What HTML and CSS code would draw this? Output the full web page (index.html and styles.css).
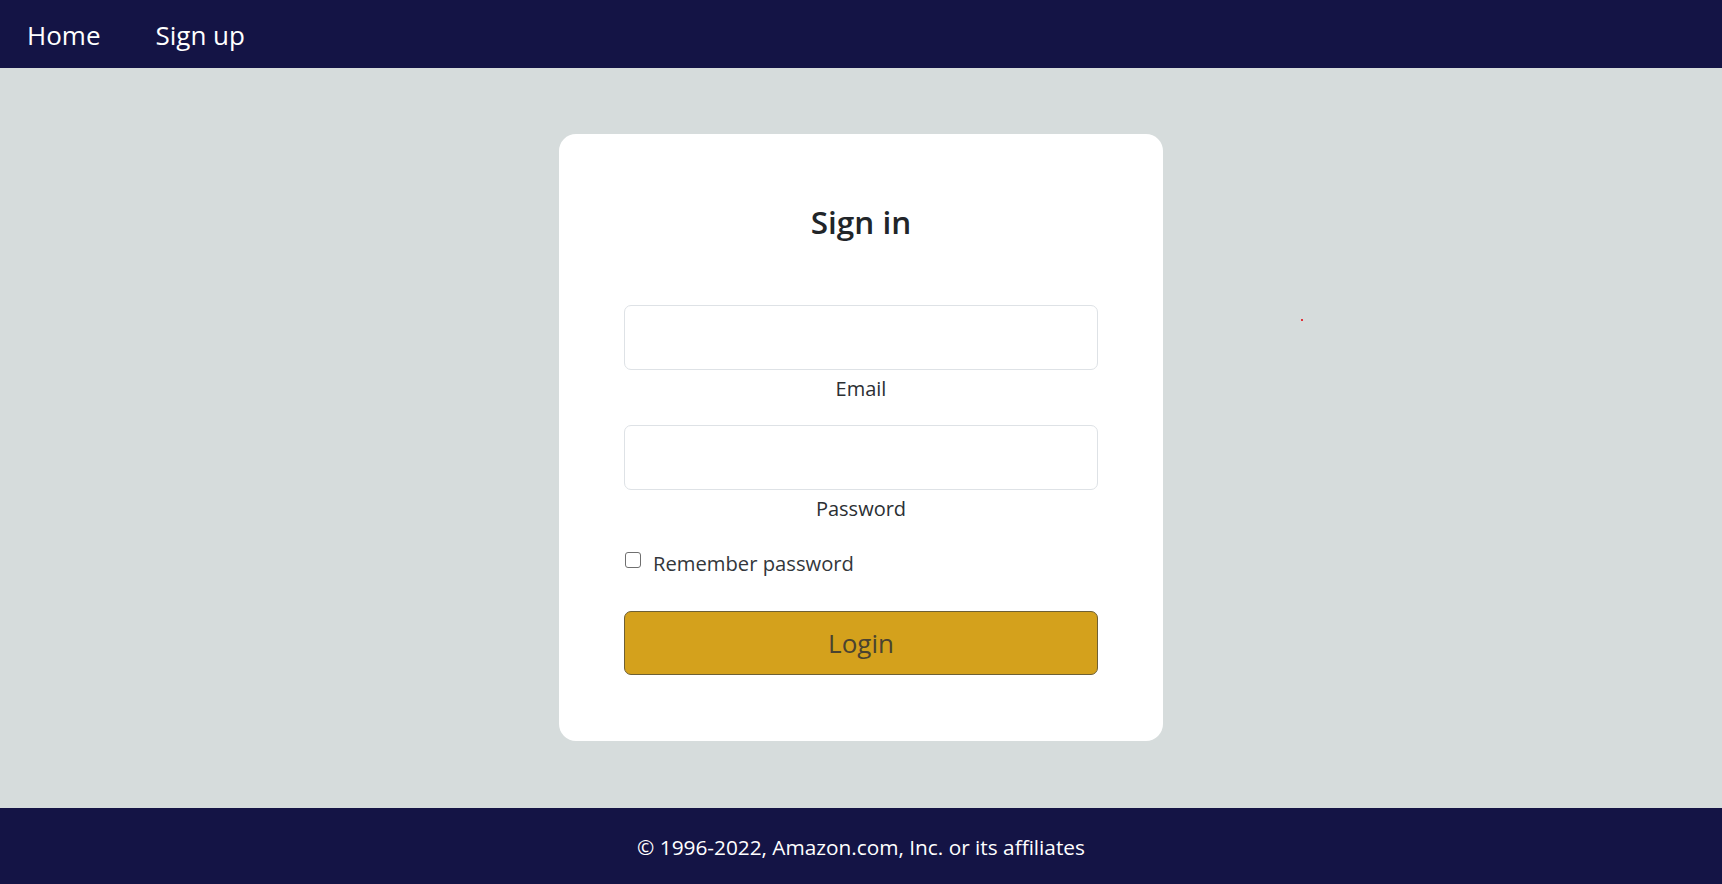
FILE: index.html
```html
<!DOCTYPE html>
<html lang="en">
<head>
<meta charset="utf-8">
<title>Sign in</title>
<link rel="stylesheet" href="styles.css">
</head>
<body>
<nav class="navbar">
  <a class="nav-link" href="#">Home</a>
  <a class="nav-link" href="#">Sign up</a>
</nav>
<main class="main">
  <div class="card">
    <h3 class="title">Sign in</h3>
    <form class="form">
      <div class="field">
        <input class="input" type="email">
        <label class="label">Email</label>
      </div>
      <div class="field">
        <input class="input" type="password">
        <label class="label">Password</label>
      </div>
      <div class="check-row">
        <input class="check" type="checkbox" id="remember">
        <label class="check-label" for="remember">Remember password</label>
      </div>
      <button class="btn" type="button">Login</button>
    </form>
  </div>
  <span class="dot"></span>
</main>
<footer class="footer">© 1996-2022, Amazon.com, Inc. or its affiliates</footer>
</body>
</html>
```
FILE: styles.css
```css
* { box-sizing: border-box; }
html, body { margin: 0; padding: 0; }
body {
  height: 100vh;
  display: flex;
  flex-direction: column;
  font-family: "Open Sans", "Noto Sans", sans-serif;
  color: #212529;
  background: #d6dcdc;
  overflow: hidden;
}
.navbar {
  height: 68px;
  flex: none;
  background: #141445;
  display: flex;
  align-items: center;
  gap: 55px;
  padding-left: 27px;
  padding-top: 2px;
}
.nav-link {
  color: #ffffff;
  text-decoration: none;
  font-size: 26px;
  line-height: 1.5;
}
.main {
  flex: 1;
  position: relative;
  display: flex;
  justify-content: center;
  align-items: flex-start;
  padding-top: 66px;
}
.card {
  width: 604px;
  background: #ffffff;
  border-radius: 17px;
  padding: 70px 65px 66px 65px;
}
.title {
  margin: 0 0 65px 0;
  text-align: center;
  font-size: 31.5px;
  font-weight: 600;
  line-height: 36px;
  color: #212529;
}
.form { display: flex; flex-direction: column; }
.field { display: flex; flex-direction: column; margin-bottom: 21px; }
.field + .field { margin-bottom: 24px; }
.input {
  height: 65px;
  width: 100%;
  border: 1px solid #dee2e6;
  border-radius: 7px;
  background: #fff;
  outline: none;
}
.label {
  margin-top: 4px;
  text-align: center;
  font-size: 20px;
  line-height: 30px;
  color: #2b2f33;
}
.check-row {
  display: flex;
  align-items: flex-start;
  height: 30px;
  margin-bottom: 33px;
}
.check {
  appearance: none;
  -webkit-appearance: none;
  width: 16px;
  height: 16px;
  margin: 4px 12px 0 1px;
  border: 1px solid #6f6f6f;
  border-radius: 3px;
  background: #fff;
}
.check-label {
  font-size: 20.2px;
  line-height: 30px;
  color: #33373b;
}
.btn {
  height: 64px;
  width: 100%;
  background: #d4a11c;
  border: 1px solid #6e6035;
  border-radius: 7px;
  font-family: "Open Sans", "Noto Sans", sans-serif;
  font-size: 26px;
  color: #4a4330;
  padding: 0;
}
.dot {
  position: absolute;
  left: 1301px;
  top: 251px;
  width: 2px;
  height: 2px;
  background: #e0323a;
}
.footer {
  height: 76px;
  flex: none;
  background: #141445;
  color: #ffffff;
  display: flex;
  align-items: center;
  justify-content: center;
  font-size: 20.8px;
  padding-top: 2px;
}
```
